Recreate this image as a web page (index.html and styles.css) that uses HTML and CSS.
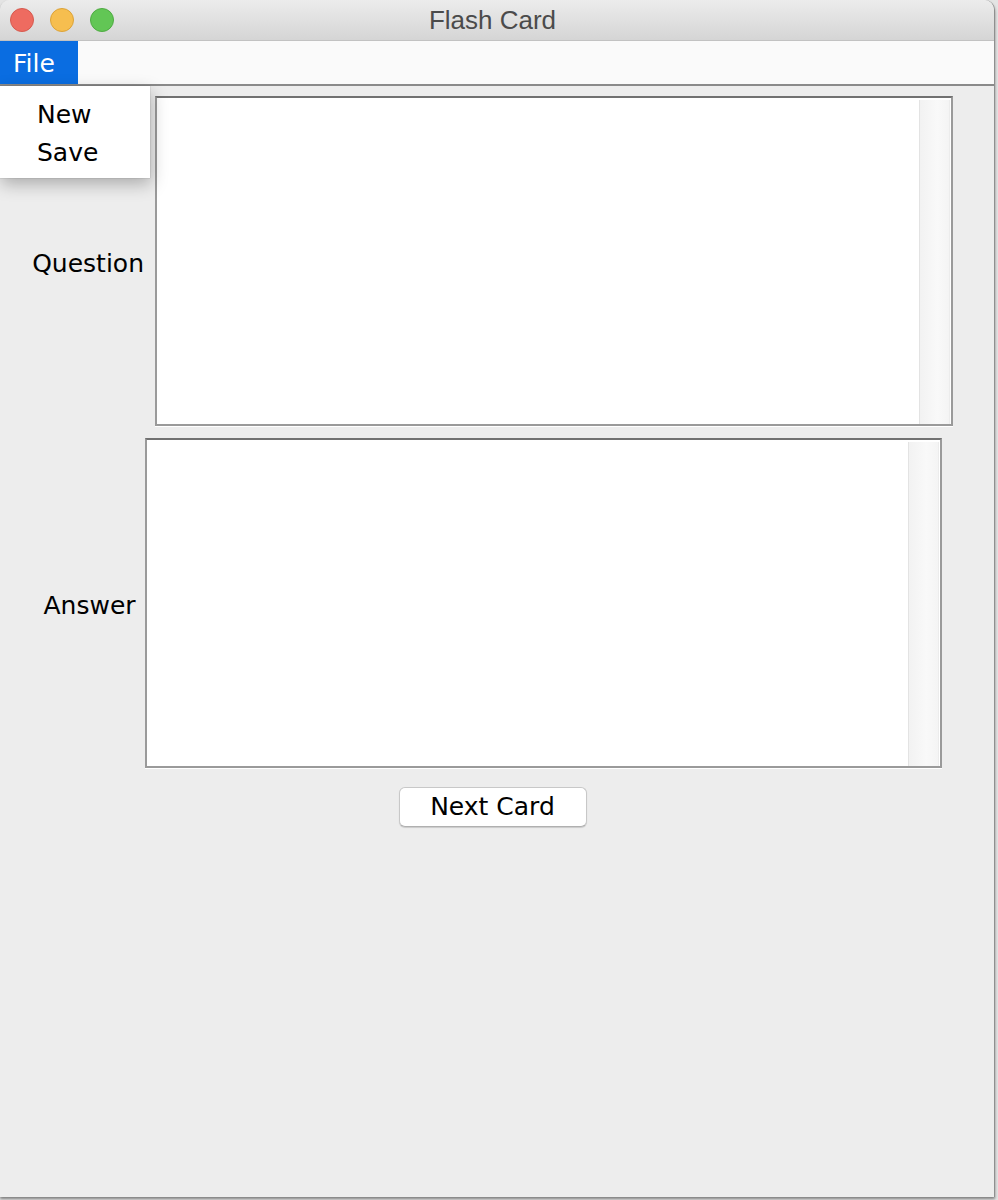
FILE: index.html
```html
<!DOCTYPE html>
<html>
<head>
<meta charset="utf-8">
<title>Flash Card</title>
<link rel="stylesheet" href="styles.css">
</head>
<body>
<div class="window">
  <div class="titlebar">
    <div class="lights">
      <span class="light red"></span>
      <span class="light yellow"></span>
      <span class="light green"></span>
    </div>
    <div class="title">Flash Card</div>
  </div>
  <div class="menubar">
    <span class="menu active">File</span>
  </div>
  <div class="content">
    <div class="row">
      <label class="label label-q">Question</label>
      <div class="textarea textarea-q"><div class="track"></div></div>
    </div>
    <div class="row row-a">
      <label class="label label-a">Answer</label>
      <div class="textarea textarea-a"><div class="track"></div></div>
    </div>
    <button class="btn">Next Card</button>
  </div>
  <div class="popup">
    <div class="item">New</div>
    <div class="item">Save</div>
  </div>
</div>
</body>
</html>
```
FILE: styles.css
```css
html, body {
  margin: 0;
  padding: 0;
}
body {
  background: #e4e4e4;
  width: 998px;
  height: 1200px;
  overflow: hidden;
  font-family: "DejaVu Sans", "Liberation Sans", sans-serif;
}
.window {
  position: relative;
  width: 994px;
  height: 1197px;
  background: #ededed;
  border-right: 1px solid #8f8f8f;
  border-radius: 10px 10px 0 0;
  box-shadow: 0 2px 3px rgba(0,0,0,0.45);
  display: flex;
  flex-direction: column;
  overflow: visible;
}
.titlebar {
  height: 40px;
  border-bottom: 1px solid #c2c2c2;
  background: linear-gradient(#ececec, #d5d5d5);
  border-radius: 10px 10px 0 0;
  display: flex;
  align-items: center;
  position: relative;
}
.lights {
  display: flex;
  gap: 16px;
  padding-left: 10px;
  padding-top: 0;
}
.light {
  width: 22px;
  height: 22px;
  border-radius: 50%;
  border: 1px solid;
}
.red { background: #ee6b60; border-color: #d65a4f; }
.yellow { background: #f6be4f; border-color: #dca338; }
.green { background: #62c655; border-color: #4fab43; }
.title {
  flex: 1;
  text-align: center;
  font-family: "Liberation Sans", Arial, sans-serif;
  font-size: 26px;
  color: #4b4b4b;
  margin-left: -114px;
  padding-right: 9px;
  line-height: 40px;
}
.menubar {
  height: 43px;
  background: #fafafa;
  border-bottom: 2px solid #8a8a8a;
  display: flex;
}
.menu {
  box-sizing: border-box;
  width: 78px;
  height: 43px;
  padding-left: 13px;
  padding-top: 3px;
  line-height: 40px;
  font-size: 25px;
  color: #000;
}
.menu.active {
  background: #0a6de1;
  color: #fff;
}
.content {
  flex: 1;
  width: 985px;
  display: flex;
  flex-direction: column;
  align-items: center;
  padding-top: 10px;
}
.row {
  display: flex;
  align-items: center;
}
.row-a {
  margin-top: 12px;
}
.label {
  font-size: 25px;
  line-height: 30px;
  padding-top: 5px;
  text-align: right;
  color: #000;
  white-space: nowrap;
}
.label-q { width: 112px; margin-right: 11px; }
.label-a { width: 91px; margin-right: 10px; }
.textarea {
  box-sizing: border-box;
  height: 330px;
  background: #fff;
  border: 2px solid #9a9a9a;
  border-top-color: #717171;
  box-shadow: 0 1px 0 #fff;
  display: flex;
  justify-content: flex-end;
  padding: 2px 1px 0 0;
}
.textarea-q { width: 798px; }
.textarea-a { width: 797px; }
.track {
  box-sizing: border-box;
  width: 31px;
  background: linear-gradient(90deg, #f2f2f2, #f9f9f9 60%, #f4f4f4);
  border-left: 1px solid #e3e3e3;
  border-right: 1px solid #ececec;
}
.btn {
  margin-top: 19px;
  width: 188px;
  height: 40px;
  background: #fff;
  border: 1px solid #c8c8c8;
  border-bottom-color: #b0b0b0;
  border-radius: 6px;
  box-shadow: 0 1px 1px rgba(0,0,0,0.15);
  font-family: "DejaVu Sans", sans-serif;
  font-size: 25px;
  color: #000;
  padding: 0;
  line-height: 36px;
}
.popup {
  position: absolute;
  left: 0;
  top: 86px;
  width: 150px;
  height: 92px;
  box-sizing: border-box;
  background: #fff;
  padding: 10px 0 6px 37px;
  box-shadow: 1px 6px 16px rgba(0,0,0,0.28), 0 0 1px rgba(0,0,0,0.35);
}
.item {
  font-size: 25px;
  line-height: 38px;
  color: #000;
}
```
